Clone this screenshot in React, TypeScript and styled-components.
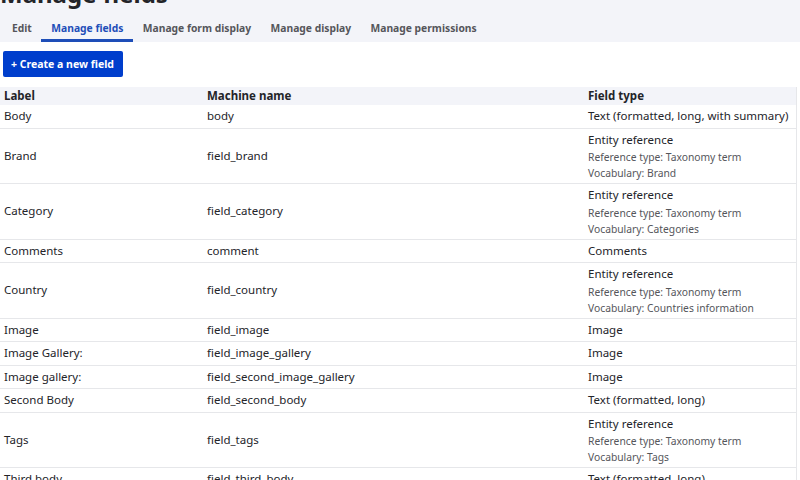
import React from "react";
import styled, { createGlobalStyle } from "styled-components";

const GlobalStyle = createGlobalStyle`
  html, body { margin: 0; padding: 0; background: #ffffff; }
  body {
    font-family: "Noto Sans", "Open Sans", sans-serif;
    color: #232429;
    -webkit-font-smoothing: antialiased;
  }
  * { box-sizing: border-box; }
`;

const Page = styled.div`
  width: 800px;
  height: 480px;
  overflow: hidden;
  background: #ffffff;
`;

const Header = styled.header`
  background: #f3f4f9;
  height: 42px;
  overflow: hidden;
  display: flex;
  flex-direction: column;
`;

const Title = styled.h1`
  margin: -18px 0 0 0;
  padding: 0;
  font-size: 24px;
  line-height: 24px;
  font-weight: 700;
  color: #232429;
`;

const Tabs = styled.nav`
  display: flex;
  margin-top: 8px;
  padding-left: 2px;
  height: 28px;
`;

const Tab = styled.a<{ $active?: boolean }>`
  display: flex;
  align-items: center;
  padding: 2px 9.5px 0 10px;
  font-size: 10.3px;
  font-weight: 700;
  color: ${(p) => (p.$active ? "#1e4eb8" : "#55565b")};
  border-bottom: 3px solid ${(p) => (p.$active ? "#1e4eb8" : "transparent")};
  text-decoration: none;
  white-space: nowrap;
`;

const Content = styled.main`
  padding: 9px 3px 0 3px;
`;

const PrimaryButton = styled.button`
  display: inline-flex;
  align-items: center;
  height: 26px;
  width: 120px;
  padding: 0 0 0 8px;
  border: none;
  border-radius: 2px;
  background: #003ecc;
  color: #ffffff;
  font-family: inherit;
  font-size: 10.5px;
  font-weight: 700;
  cursor: pointer;
`;

const Table = styled.table`
  margin-top: 10px;
  margin-left: -3px;
  width: 797px;
  table-layout: fixed;
  border-collapse: collapse;
  border-right: 1px solid #e6e7ea;
  font-size: 11.5px;
`;

const Col = styled.col<{ $w?: number }>`
  width: ${(p) => (p.$w ? `${p.$w}px` : "auto")};
`;

const HeadCell = styled.th`
  background: #f3f4f9;
  text-align: left;
  font-weight: 700;
  font-size: 11.5px;
  color: #232429;
  height: 18px;
  padding: 0 4px;
  line-height: 18px;
`;

const Row = styled.tr`
  border-bottom: 1px solid #e6e7ea;
`;

const Cell = styled.td`
  padding: 1px 4px 2px 4px;
  vertical-align: middle;
  line-height: 19.5px;
  color: #232429;
  white-space: nowrap;
`;

const TypeMain = styled.div`
  line-height: 19.5px;
`;

const TypeSub = styled.div`
  font-size: 10.3px;
  line-height: 16px;
  color: #55565b;
`;

type Field = {
  label: string;
  machine: string;
  type: string;
  details?: string[];
};

const fields: Field[] = [
  { label: "Body", machine: "body", type: "Text (formatted, long, with summary)" },
  {
    label: "Brand",
    machine: "field_brand",
    type: "Entity reference",
    details: ["Reference type: Taxonomy term", "Vocabulary: Brand"],
  },
  {
    label: "Category",
    machine: "field_category",
    type: "Entity reference",
    details: ["Reference type: Taxonomy term", "Vocabulary: Categories"],
  },
  { label: "Comments", machine: "comment", type: "Comments" },
  {
    label: "Country",
    machine: "field_country",
    type: "Entity reference",
    details: ["Reference type: Taxonomy term", "Vocabulary: Countries information"],
  },
  { label: "Image", machine: "field_image", type: "Image" },
  { label: "Image Gallery:", machine: "field_image_gallery", type: "Image" },
  { label: "Image gallery:", machine: "field_second_image_gallery", type: "Image" },
  { label: "Second Body", machine: "field_second_body", type: "Text (formatted, long)" },
  {
    label: "Tags",
    machine: "field_tags",
    type: "Entity reference",
    details: ["Reference type: Taxonomy term", "Vocabulary: Tags"],
  },
  { label: "Third body", machine: "field_third_body", type: "Text (formatted, long)" },
];

const tabs = ["Edit", "Manage fields", "Manage form display", "Manage display", "Manage permissions"];

export default function App() {
  return (
    <>
      <GlobalStyle />
      <Page>
        <Header>
          <Title>Manage fields</Title>
          <Tabs>
            {tabs.map((t) => (
              <Tab key={t} $active={t === "Manage fields"}>
                {t}
              </Tab>
            ))}
          </Tabs>
        </Header>
        <Content>
          <PrimaryButton>+ Create a new field</PrimaryButton>
          <Table>
            <colgroup>
              <Col $w={203} />
              <Col $w={381} />
              <Col />
            </colgroup>
            <thead>
              <tr>
                <HeadCell>Label</HeadCell>
                <HeadCell>Machine name</HeadCell>
                <HeadCell>Field type</HeadCell>
              </tr>
            </thead>
            <tbody>
              {fields.map((f) => (
                <Row key={f.machine}>
                  <Cell>{f.label}</Cell>
                  <Cell>{f.machine}</Cell>
                  <Cell>
                    <TypeMain>{f.type}</TypeMain>
                    {f.details?.map((d) => (
                      <TypeSub key={d}>{d}</TypeSub>
                    ))}
                  </Cell>
                </Row>
              ))}
            </tbody>
          </Table>
        </Content>
      </Page>
    </>
  );
}
